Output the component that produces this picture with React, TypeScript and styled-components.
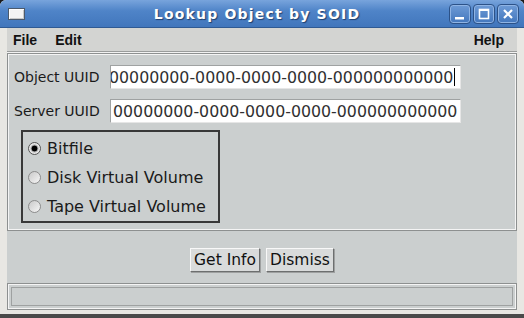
import styled, { createGlobalStyle } from "styled-components";

const GlobalStyle = createGlobalStyle`
    html, body {
        margin: 0;
        padding: 0;
        background: #1a1a1a;
    }
    * {
        box-sizing: border-box;
    }
`;

const Window = styled.div`
    width: 524px;
    height: 318px;
    display: flex;
    flex-direction: column;
    background: #e8e7e3;
    border-bottom: 4px solid #4a4a4a;
    border-radius: 6px 6px 0 0;
    overflow: hidden;
    font-family: "DejaVu Sans", sans-serif;
`;

const TitleBar = styled.div`
    height: 28px;
    flex: none;
    display: flex;
    align-items: center;
    padding: 0 5px 0 8px;
    background: linear-gradient(#78a4dc 0%, #4f84c8 40%, #4176bc 100%);
    border-bottom: 1px solid #2f5a93;
`;

const WinIcon = styled.div`
    width: 17px;
    height: 12px;
    background: #f4f4f4;
    border: 1px solid #4c5a6c;
    box-shadow: inset 1px 1px 0 #ffffff, inset -1px -1px 0 #c8c8c8;
`;

const Title = styled.div`
    flex: 1;
    text-align: center;
    color: #ffffff;
    font-weight: bold;
    font-size: 14px;
    letter-spacing: 1.2px;
    text-shadow: 1px 1px 1px #1f3f6e;
    padding-left: 40px;
`;

const TitleButtons = styled.div`
    display: flex;
    gap: 2px;
`;

const TitleButton = styled.div`
    width: 22px;
    height: 20px;
    border-radius: 4px;
    border: 1px solid #2c5288;
    background: linear-gradient(#6e9bd6, #4377bd);
    box-shadow: inset 0 0 0 1px #8fb4e4;
    display: flex;
    align-items: center;
    justify-content: center;
`;

const Frame = styled.div`
    flex: 1;
    display: flex;
    flex-direction: column;
    margin: 0 7px 4px 7px;
    background: #cbcfcf;
`;

const MenuBar = styled.div`
    height: 24px;
    display: flex;
    align-items: center;
    padding: 1px 6px 0 6px;
    background: #d3d4d2;
    border-bottom: 1px solid #9a9c9b;
    box-shadow: 0 1px 0 #f2f2f2;
`;

const MenuItem = styled.div<{ right?: boolean }>`
    font-family: "Liberation Sans", Arial, sans-serif;
    font-weight: bold;
    font-size: 14px;
    color: #111;
    margin-right: 18px;
    ${(p) => (p.right ? "margin-left: auto; margin-right: 7px;" : "")}
`;

const Panel = styled.div`
    margin-top: 1px;
    height: 178px;
    border: 1px solid #8d9090;
    box-shadow: inset 1px 1px 0 #f4f4f4, inset -1px -1px 0 #f4f4f4;
    padding: 11px 6px 0 6px;
    display: flex;
    flex-direction: column;
    gap: 10px;
`;

const FieldRow = styled.div`
    display: flex;
    align-items: center;
`;

const Label = styled.div`
    width: 96px;
    font-size: 14px;
    color: #1a1a1a;
`;

const Field = styled.div`
    width: 351px;
    height: 24px;
    background: #ffffff;
    border-top: 1px solid #9fa2a2;
    border-left: 1px solid #9fa2a2;
    border-bottom: 1px solid #e6e6e6;
    border-right: 1px solid #e6e6e6;
    overflow: hidden;
    white-space: nowrap;
    display: flex;
    align-items: center;
    padding-left: 2px;
`;

const FieldText = styled.span<{ shift?: number }>`
    font-size: 15.8px;
    color: #303030;
    margin-left: ${(p) => p.shift ?? 0}px;
`;

const Caret = styled.span`
    display: inline-block;
    width: 1px;
    height: 18px;
    background: #000;
    margin-left: 1px;
`;

const RadioBox = styled.div`
    margin: -3px 0 0 7px;
    width: 199px;
    height: 93px;
    border: 2px solid #383838;
    padding: 2px 0 0 5px;
    display: flex;
    flex-direction: column;
`;

const RadioRow = styled.div`
    height: 30px;
    display: flex;
    align-items: center;
    gap: 6px;
    font-size: 16px;
    color: #1a1a1a;
`;

const RadioDot = styled.span<{ checked?: boolean }>`
    width: 13px;
    height: 13px;
    border-radius: 50%;
    border: 1px solid ${(p) => (p.checked ? "#555" : "#8c8c8c")};
    background: ${(p) =>
        p.checked
            ? "radial-gradient(circle, #000 0 2.6px, #9a9a9a 3.2px, #e8e8e8 4.5px)"
            : "linear-gradient(135deg, #c9c9c9, #f6f6f6)"};
    flex: none;
`;

const ButtonBar = styled.div`
    flex: 1;
    display: flex;
    justify-content: center;
    align-items: center;
    gap: 6px;
    padding-top: 5px;
`;

const Button = styled.button`
    height: 24px;
    padding: 0 3px;
    font-family: "DejaVu Sans", sans-serif;
    font-size: 15.5px;
    color: #111;
    background: #d9dbdb;
    border: 1px solid;
    border-color: #f8f8f8 #6d6f6f #6d6f6f #f8f8f8;
    box-shadow: 1px 1px 0 #9ea0a0;
`;

const StatusBar = styled.div`
    height: 27px;
    flex: none;
    border: 1px solid #8d9090;
    box-shadow: inset 0 0 0 1px #f4f4f4, inset 0 0 0 3px #cbcfcf, inset 0 0 0 4px #9ea1a1;
`;

const App = () => {
    return (
        <>
            <GlobalStyle />
            <Window>
                <TitleBar>
                    <WinIcon />
                    <Title>Lookup Object by SOID</Title>
                    <TitleButtons>
                        <TitleButton>
                            <svg width="12" height="12" viewBox="0 0 12 12">
                                <rect x="1" y="9" width="9" height="2.5" fill="#fff" />
                            </svg>
                        </TitleButton>
                        <TitleButton>
                            <svg width="12" height="12" viewBox="0 0 12 12">
                                <rect x="1.5" y="1.5" width="9" height="9" fill="none" stroke="#fff" strokeWidth="1.6" />
                                <rect x="1.5" y="1.5" width="9" height="1.5" fill="#fff" />
                            </svg>
                        </TitleButton>
                        <TitleButton>
                            <svg width="12" height="12" viewBox="0 0 12 12">
                                <path d="M2 2 L10 10 M10 2 L2 10" stroke="#fff" strokeWidth="2.2" />
                            </svg>
                        </TitleButton>
                    </TitleButtons>
                </TitleBar>
                <Frame>
                    <MenuBar>
                        <MenuItem>File</MenuItem>
                        <MenuItem>Edit</MenuItem>
                        <MenuItem right>Help</MenuItem>
                    </MenuBar>
                    <Panel>
                        <FieldRow>
                            <Label>Object UUID</Label>
                            <Field>
                                <FieldText shift={-4}>00000000-0000-0000-0000-000000000000</FieldText>
                                <Caret />
                            </Field>
                        </FieldRow>
                        <FieldRow>
                            <Label>Server UUID</Label>
                            <Field>
                                <FieldText>00000000-0000-0000-0000-000000000000</FieldText>
                            </Field>
                        </FieldRow>
                        <RadioBox>
                            <RadioRow><RadioDot checked />Bitfile</RadioRow>
                            <RadioRow><RadioDot />Disk Virtual Volume</RadioRow>
                            <RadioRow><RadioDot />Tape Virtual Volume</RadioRow>
                        </RadioBox>
                    </Panel>
                    <ButtonBar>
                        <Button>Get Info</Button>
                        <Button>Dismiss</Button>
                    </ButtonBar>
                    <StatusBar />
                </Frame>
            </Window>
        </>
    );
};

export default App;
